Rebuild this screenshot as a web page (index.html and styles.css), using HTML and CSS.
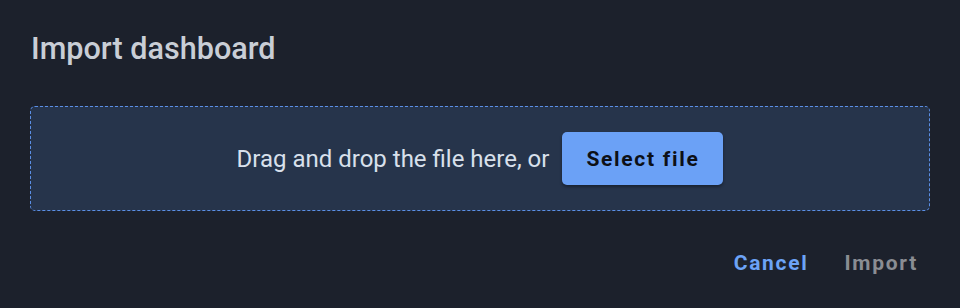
FILE: index.html
```html
<!DOCTYPE html>
<html lang="en">
<head>
<meta charset="utf-8">
<title>Import dashboard</title>
<link rel="stylesheet" href="styles.css">
</head>
<body>
<div class="dialog">
  <h2 class="dialog-title">Import dashboard</h2>
  <div class="dropzone">
    <span class="dropzone-text">Drag and drop the file here, or</span>
    <button class="btn-select" type="button">Select file</button>
  </div>
  <div class="dialog-actions">
    <button class="btn-text btn-cancel" type="button">Cancel</button>
    <button class="btn-text btn-import" type="button" disabled>Import</button>
  </div>
</div>
</body>
</html>
```
FILE: styles.css
```css
html, body {
  margin: 0;
  padding: 0;
  background: #1c212c;
}
body {
  font-family: Roboto, "Noto Sans", "Liberation Sans", sans-serif;
  width: 960px;
  height: 308px;
  overflow: hidden;
}
.dialog {
  padding: 27px 30px 0 30px;
}
.dialog-title {
  margin: 0;
  font-size: 30.6px;
  font-weight: 500;
  line-height: 44px;
  color: #c9ced6;
  padding-left: 1px;
}
.dropzone {
  margin-top: 35px;
  height: 103px;
  border: 1px dashed #5b8fe6;
  border-radius: 5px;
  background: #26344b;
  display: flex;
  align-items: center;
  justify-content: center;
  gap: 13px;
}
.dropzone-text {
  font-size: 24px;
  color: #d8e0ec;
}
.btn-select {
  font-family: inherit;
  border: none;
  border-radius: 5px;
  background: #6ba1f6;
  color: #0d1016;
  font-size: 21px;
  font-weight: 700;
  letter-spacing: 1.7px;
  width: 161px;
  height: 53px;
  box-shadow: 0 2px 3px rgba(0, 0, 0, 0.35);
  padding: 0;
}
.dialog-actions {
  display: flex;
  justify-content: flex-end;
  gap: 12px;
  margin-top: 30px;
}
.btn-text {
  font-family: inherit;
  background: none;
  border: none;
  font-size: 21px;
  font-weight: 700;
  letter-spacing: 1.7px;
  padding: 10px 12px;
}
.btn-cancel {
  color: #6ca3f6;
}
.btn-import {
  color: #8a8d93;
}
```
